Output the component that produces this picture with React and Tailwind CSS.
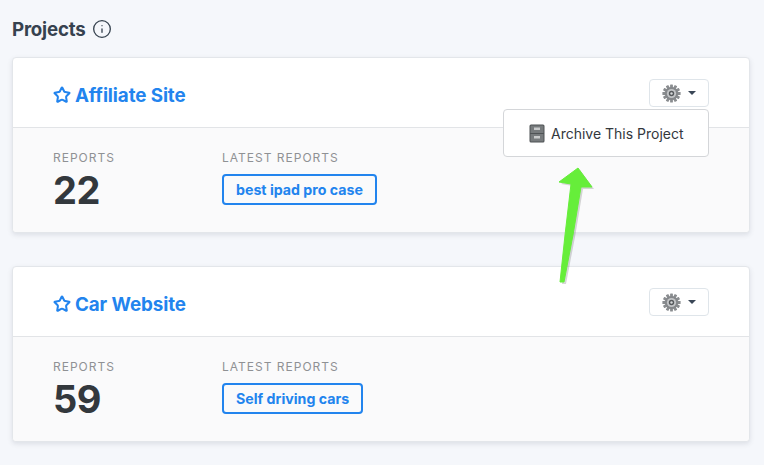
import { Star, Info } from 'lucide-react';

function GearIcon() {
  const teeth = [0, 30, 60, 90, 120, 150, 180, 210, 240, 270, 300, 330];
  return (
    <svg width="19" height="19" viewBox="0 0 19 19">
      {teeth.map((a) => (
        <rect key={a} x="8.1" y="0.4" width="2.8" height="4" rx="0.5" fill="#8a8d90" transform={`rotate(${a} 9.5 9.5)`} />
      ))}
      <circle cx="9.5" cy="9.5" r="6.6" fill="#85888b" />
      <circle cx="9.5" cy="9.5" r="4.6" fill="#c3c5c7" />
      <circle cx="9.5" cy="9.5" r="2.7" fill="#55595c" />
      <circle cx="9.5" cy="9.5" r="1.2" fill="#d5d7d8" />
    </svg>
  );
}

function CabinetIcon() {
  return (
    <svg width="16" height="19" viewBox="0 0 16 19">
      <rect x="0.5" y="0.5" width="15" height="18" rx="1.5" fill="#4f5355" />
      <rect x="1.5" y="1.5" width="13" height="7.5" rx="0.5" fill="#777b7d" />
      <rect x="1.5" y="10" width="13" height="7.5" rx="0.5" fill="#777b7d" />
      <rect x="5" y="3.5" width="6" height="2.5" fill="#c9cbcc" />
      <rect x="5" y="12" width="6" height="2.5" fill="#c9cbcc" />
    </svg>
  );
}

function ProjectCard({ name, count, report, menuOpen, className }) {
  return (
    <div className={`relative bg-white rounded border border-[#e3e6ea] shadow-[0_2px_5px_rgba(60,70,90,0.13)] ${className}`}>
      <div className="h-[70px] pl-10 pr-10 pt-[7px] flex items-center justify-between border-b border-[#e2e4e7]">
        <a className="flex items-center gap-[4px] text-[#2284ee] text-[18.8px] font-bold tracking-[-0.1px]">
          <Star size={18} strokeWidth={2.7} className="-mt-[2px]" />
          {name}
        </a>
        <button className="-mt-[6px] w-[60px] h-[28px] flex items-center justify-center gap-[7px] bg-white border border-[#dfe5ea] rounded">
          <GearIcon />
          <span className="w-0 h-0 border-x-[4px] border-x-transparent border-t-[4px] border-t-[#3a4756]" />
        </button>
      </div>
      <div className="bg-[#fafafb] rounded-b h-[104px] pl-10 pt-[22px] flex">
        <div className="w-[169px]">
          <div className="text-[12px] leading-[15px] tracking-[1px] text-[#8f9194]">REPORTS</div>
          <div className="mt-[2px] text-[38px] leading-[46px] font-bold tracking-[-0.5px] text-[#33383d]">{count}</div>
        </div>
        <div>
          <div className="text-[12px] leading-[15px] tracking-[1px] text-[#8f9194]">LATEST REPORTS</div>
          <a className="mt-[9px] inline-block h-[31px] px-[12px] leading-[27px] border-2 border-[#2284ee] rounded text-[14.2px] font-bold text-[#2284ee]">{report}</a>
        </div>
      </div>
      {menuOpen && (
        <div className="absolute left-[490px] top-[51px] w-[206px] h-[48px] bg-white border border-[#d4d6d9] rounded flex items-center gap-[6px] pl-[25px] text-[14px] text-[#33383d]">
          <CabinetIcon />
          Archive This Project
        </div>
      )}
    </div>
  );
}

export default function App() {
  return (
    <div className="relative w-[764px] h-[465px] overflow-hidden bg-[#f5f7fb] font-['Inter',sans-serif]">
      <div className="pl-3 pr-[14px] pt-[18px]">
        <div className="h-[24px] mb-[15px] flex items-center gap-[6px] text-[#36424f] text-[18.7px] font-bold tracking-[-0.2px]">
          Projects
          <Info size={20} strokeWidth={1.6} className="text-[#36424f] -mt-[3px]" />
        </div>
        <ProjectCard name="Affiliate Site" count="22" report="best ipad pro case" menuOpen />
        <ProjectCard name="Car Website" count="59" report="Self driving cars" className="mt-[33px]" />
      </div>
      {/* annotation arrow drawn on top of the screenshot */}
      <svg className="absolute left-0 top-0 pointer-events-none" width="764" height="465">
        <polygon points="581,187 573,235 564,282 560,282 565,235 571,184 559,182 578,168 592,187" fill="#4a4a4a" opacity="0.22" transform="translate(2 2)" />
        <polygon points="581,187 573,235 564,282 560,282 565,235 571,184 559,182 578,168 592,187" fill="#66ee3a" stroke="#66ee3a" strokeWidth="1" strokeLinejoin="round" />
      </svg>
    </div>
  );
}
